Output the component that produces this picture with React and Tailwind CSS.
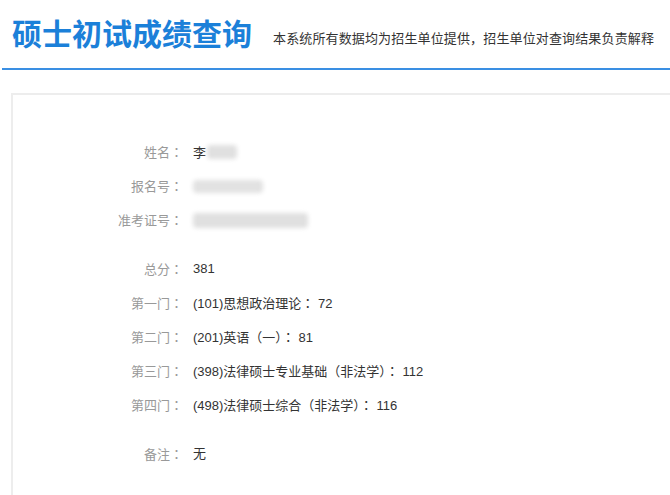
import React from "react";

const font = { fontFamily: '"Liberation Sans", "Noto Sans CJK SC", sans-serif' };
const tc = { fontFamily: '"Noto Sans CJK TC", sans-serif' };

function C() {
  return <span style={tc}>：</span>;
}

function Row({ label, children }) {
  return (
    <div className="flex h-[34px] items-center">
      <div className="w-[170px] shrink-0 text-right text-[13px] text-[#999999]">
        {label}
        <C />
      </div>
      <div className="ml-[10px] whitespace-pre text-[13px] leading-[16px] text-[#333333]">{children}</div>
    </div>
  );
}

export default function App() {
  return (
    <div className="h-[495px] w-[670px] overflow-hidden bg-white" style={font}>
      <div className="flex h-[68px] items-center pl-[12px] pt-[1px]">
        <div className="text-[30px] font-bold text-[#1b80d9]">硕士初试成绩查询</div>
        <div className="ml-[21px] mt-[8px] text-[13px] tracking-[0.14px] text-[#333333]">
          本系统所有数据均为招生单位提供，招生单位对查询结果负责解释
        </div>
      </div>
      <div className="ml-[2px] h-[2px] bg-[#3a8fe3]" />
      <div className="ml-[11px] mt-[23px] h-[500px] w-[700px] border-2 border-[#ededed] pt-[40px]">
        <Row label="姓名">
          <span className="align-middle">李</span>
          <span className="ml-[1px] inline-block h-[14px] w-[30px] rounded bg-[#e0e0e0] align-middle blur-[2px]" />
        </Row>
        <Row label="报名号">
          <span className="inline-block h-[13px] w-[70px] rounded bg-[#e2e2e2] align-middle blur-[2px]" />
        </Row>
        <Row label="准考证号">
          <span className="inline-block h-[15px] w-[115px] rounded bg-[#e0e0e0] align-middle blur-[2px]" />
        </Row>
        <div className="h-[15px]" />
        <Row label="总分">381</Row>
        <Row label="第一门">
          {"(101)思想政治理论"}<C />{" 72"}
        </Row>
        <Row label="第二门">
          {"(201)英语（一）"}<C />{" 81"}
        </Row>
        <Row label="第三门">
          {"(398)法律硕士专业基础（非法学）"}<C />{" 112"}
        </Row>
        <Row label="第四门">
          {"(498)法律硕士综合（非法学）"}<C />{" 116"}
        </Row>
        <div className="h-[15px]" />
        <Row label="备注">无</Row>
      </div>
    </div>
  );
}
